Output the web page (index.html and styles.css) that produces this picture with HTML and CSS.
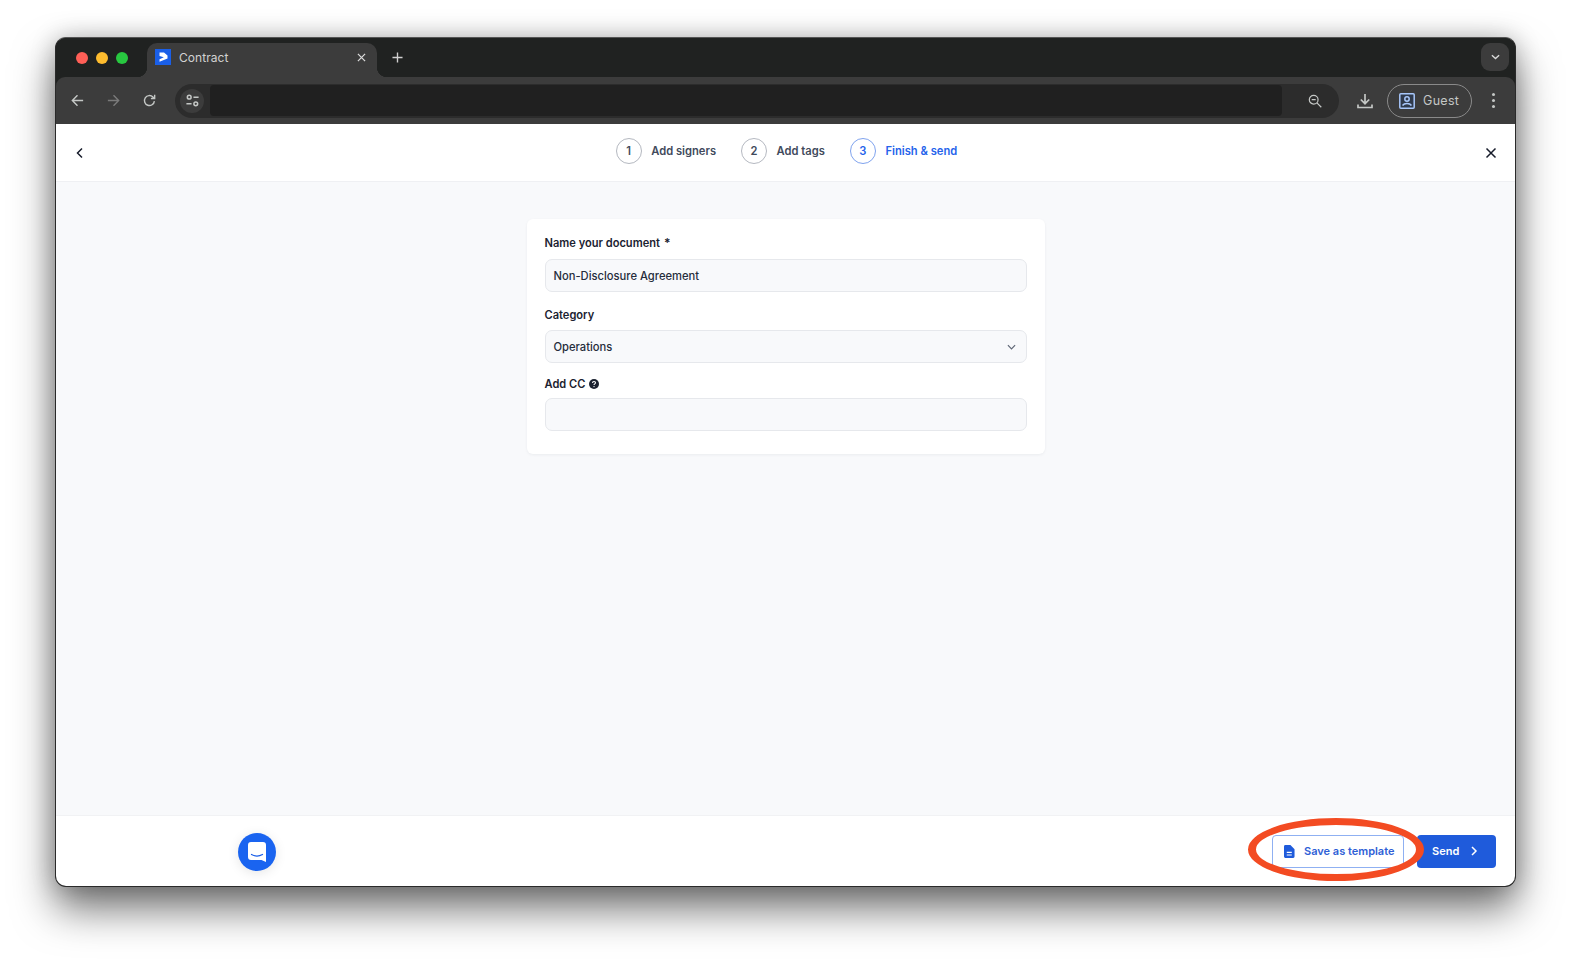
FILE: index.html
```html
<!DOCTYPE html>
<html lang="en">
<head>
    <meta charset="UTF-8">
    <meta name="viewport" content="width=device-width, initial-scale=1.0">
    <title>Contract</title>
    <link rel="stylesheet" href="styles.css">
</head>
<body>
    <div class="window">
        <div class="tabStrip">
            <div class="lights">
                <span class="light red"></span>
                <span class="light yellow"></span>
                <span class="light green"></span>
            </div>
            <div class="tab">
                <svg class="favicon" viewBox="0 0 16 16">
                    <rect width="16" height="16" fill="#1a5fe8"/>
                    <path d="M4.500 3.500h4.500l3.500 3v3l-8 3.200V10.300L8.800 8.300 4.500 7z" fill="#fff"/>
                </svg>
                <span class="tabTitle">Contract</span>
                <svg class="tabClose" viewBox="0 0 10 10"><path d="M1 1l8 8M9 1l-8 8"/></svg>
            </div>
            <svg class="newTab" viewBox="0 0 12 12"><path d="M6 .5v11M.5 6h11"/></svg>
            <div class="tabMenu">
                <svg viewBox="0 0 10 6"><path d="M1 1l4 3.600L9 1"/></svg>
            </div>
        </div>
        <div class="toolbar">
            <svg class="navIcon" viewBox="0 0 16 16"><path d="M14 8H2.500M8 2.500L2.500 8 8 13.500"/></svg>
            <svg class="navIcon dim" viewBox="0 0 16 16"><path d="M2 8h11.500M8 2.500L13.500 8 8 13.500"/></svg>
            <svg class="navIcon" viewBox="0 0 16 16"><path d="M13.200 8.600a5.300 5.300 0 1 1-1.500-4.300l1.600 1.500M13.500 1.800v4h-4"/></svg>
            <div class="omnibox">
                <div class="siteIcon">
                    <svg viewBox="0 0 16 16">
                        <circle cx="4.500" cy="4.500" r="2"/>
                        <path d="M9 4.500h5.500M1.500 11.500H7"/>
                        <circle cx="11.500" cy="11.500" r="2"/>
                    </svg>
                </div>
                <div class="address"></div>
                <svg class="zoomIcon" viewBox="0 0 16 16">
                    <circle cx="6.500" cy="6.500" r="5"/>
                    <path d="M10.200 10.200l5 5M4.200 6.500h4.600"/>
                </svg>
            </div>
            <svg class="downloadIcon" viewBox="0 0 16 16"><path d="M8 1v9.500M3.800 6.500L8 10.700l4.200-4.200M1 11.500v3h14v-3"/></svg>
            <div class="guest">
                <svg viewBox="0 0 16 16">
                    <rect x=".8" y=".8" width="14.400" height="14.400" rx="1"/>
                    <circle cx="8" cy="6" r="2.200"/>
                    <path d="M3.500 12.500c1-1.400 2.500-2 4.500-2s3.500.6 4.500 2"/>
                </svg>
                <span>Guest</span>
            </div>
            <div class="dots"><i></i><i></i><i></i></div>
        </div>
        <div class="page">
            <div class="header">
                <svg class="headerIcon" viewBox="0 0 12 12"><path d="M8 1.500L3.500 6 8 10.500"/></svg>
                <div class="steps">
                    <div class="step"><span class="stepNum">1</span>Add signers</div>
                    <div class="step"><span class="stepNum">2</span>Add tags</div>
                    <div class="step active"><span class="stepNum">3</span>Finish &amp; send</div>
                </div>
                <svg class="headerIcon" viewBox="0 0 12 12"><path d="M1.500 1.500l9 9M10.500 1.500l-9 9"/></svg>
            </div>
            <div class="main">
                <div class="card">
                    <label class="fieldLabel">Name your document <span class="req">*</span></label>
                    <div class="field">Non-Disclosure Agreement</div>
                    <label class="fieldLabel">Category</label>
                    <div class="field select">
                        Operations
                        <svg viewBox="0 0 10 6"><path d="M1 1l4 4 4-4"/></svg>
                    </div>
                    <label class="fieldLabel cc">
                        Add CC
                        <svg class="helpIcon" viewBox="0 0 10 10">
                            <circle cx="5" cy="5" r="5" fill="#1b2230"/>
                            <path d="M3.500 3.900c0-.9.7-1.400 1.500-1.400s1.500.5 1.500 1.300c0 1.100-1.500 1-1.500 2.200" fill="none" stroke="#fff" stroke-width="1.100"/>
                            <circle cx="5" cy="7.600" r=".7" fill="#fff"/>
                        </svg>
                    </label>
                    <div class="field last"></div>
                </div>
            </div>
            <div class="footer">
                <div class="actions">
                    <button class="btn outline">
                        <svg viewBox="0 0 12 14">
                            <path d="M1.500 0H7l4.500 4.500V12.500A1.500 1.500 0 0 1 10 14H1.500A1.500 1.500 0 0 1 0 12.500V1.500A1.500 1.500 0 0 1 1.500 0z" fill="#1f5bdb"/>
                            <path d="M3 8h5.500M3 10.800h5.500" stroke="#fff" stroke-width="1.300"/>
                        </svg>
                        Save as template
                    </button>
                    <button class="btn primary">
                        Send
                        <svg viewBox="0 0 8 12"><path d="M2 2l4 4-4 4"/></svg>
                    </button>
                    <div class="annotation"></div>
                </div>
            </div>
            <div class="chatBubble">
                <svg viewBox="0 0 18 20">
                    <path d="M3 0h12a3 3 0 0 1 3 3v17l-4.500-2H3a3 3 0 0 1-3-3V3a3 3 0 0 1 3-3z" fill="#fff"/>
                    <path d="M3.500 12.500c3.200 1.800 7.800 1.800 11 0" fill="none" stroke="#1a5fe8" stroke-width="1.300" stroke-linecap="round"/>
                </svg>
            </div>
        </div>
    </div>
</body>
</html>
```

FILE: styles.css
```css
* {
    margin: 0;
    padding: 0;
    box-sizing: border-box;
}

body {
    font-family: Inter, "Liberation Sans", sans-serif;
    background: #ffffff;
    height: 960px;
    padding: 37px 55px 0 55px;
    overflow: hidden;
}

.window {
    position: relative;
    width: 1461px;
    height: 850px;
    border-radius: 11px;
    border: 1px solid #2a2a2a;
    border-top-color: #555;
    background: #202221;
    box-shadow: 0 22px 42px rgba(0, 0, 0, 0.55), 0 0 24px rgba(0, 0, 0, 0.22);
    display: flex;
    flex-direction: column;
    overflow: hidden;
}

.tabStrip {
    height: 39px;
    flex-shrink: 0;
    display: flex;
    align-items: flex-end;
    padding-left: 91px;
    background: #202221;
    position: relative;
}

.lights {
    position: absolute;
    left: 20px;
    top: 14px;
    display: flex;
    gap: 8px;
}

.light {
    width: 12px;
    height: 12px;
    border-radius: 50%;
}

.red { background: #ff5f57; }
.yellow { background: #febc2e; }
.green { background: #28c840; }

.tab {
    position: relative;
    width: 230px;
    height: 34px;
    background: #3c3c3c;
    border-radius: 10px 10px 0 0;
    display: flex;
    align-items: center;
    padding: 0 11px 6px 8px;
}

.tab::before,
.tab::after {
    content: "";
    position: absolute;
    bottom: 0;
    width: 10px;
    height: 10px;
}

.tab::before {
    left: -10px;
    background: radial-gradient(circle at 0 0, transparent 10px, #3c3c3c 10.500px);
}

.tab::after {
    right: -10px;
    background: radial-gradient(circle at 100% 0, transparent 10px, #3c3c3c 10.500px);
}

.favicon {
    width: 16px;
    height: 16px;
    flex-shrink: 0;
}

.tabTitle {
    margin-left: 8px;
    flex: 1;
    font-size: 12px;
    color: #d2d2d2;
    letter-spacing: 0.05px;
}

.tabClose {
    width: 9px;
    height: 9px;
    fill: none;
    stroke: #d8d8d8;
    stroke-width: 1.400;
}

.newTab {
    width: 11px;
    height: 11px;
    margin: 0 0 14px 15px;
    fill: none;
    stroke: #d0d0d0;
    stroke-width: 1.500;
}

.tabMenu {
    position: absolute;
    right: 6px;
    top: 5px;
    width: 28px;
    height: 28px;
    border-radius: 9px;
    background: #3c3c3c;
    display: flex;
    align-items: center;
    justify-content: center;
}

.tabMenu svg {
    width: 9px;
    height: 6px;
    fill: none;
    stroke: #d8d8d8;
    stroke-width: 1.600;
}

.toolbar {
    height: 47px;
    flex-shrink: 0;
    background: #3c3c3c;
    border-radius: 9px 9px 0 0;
    display: flex;
    align-items: center;
    padding-left: 14px;
}

.navIcon {
    width: 15px;
    height: 15px;
    margin-right: 21px;
    fill: none;
    stroke: #c4c7c5;
    stroke-width: 1.500;
}

.dim {
    stroke: #7a7a7a;
}

.omnibox {
    width: 1164px;
    height: 34px;
    margin-left: -3px;
    border-radius: 17px;
    background: #2c2c2c;
    display: flex;
    align-items: center;
    padding-left: 5px;
}

.siteIcon {
    width: 24px;
    height: 24px;
    border-radius: 50%;
    background: #3c3c3c;
    display: flex;
    align-items: center;
    justify-content: center;
}

.siteIcon svg {
    width: 15px;
    height: 15px;
    fill: none;
    stroke: #c4c7c5;
    stroke-width: 1.600;
}

.address {
    width: 1072px;
    height: 31px;
    margin-left: 6px;
    border-radius: 4px;
    background: #202020;
}

.zoomIcon {
    width: 14px;
    height: 14px;
    margin-left: 26px;
    fill: none;
    stroke: #c4c7c5;
    stroke-width: 1.400;
}

.downloadIcon {
    width: 16px;
    height: 16px;
    margin-left: 18px;
    fill: none;
    stroke: #c4c7c5;
    stroke-width: 1.700;
}

.guest {
    width: 85px;
    height: 34px;
    margin-left: 14px;
    border: 1px solid #8a8a8a;
    border-radius: 17px;
    display: flex;
    align-items: center;
    padding-left: 11px;
    gap: 8px;
    font-size: 12.500px;
    color: #c4c7c5;
    letter-spacing: 0.3px;
}

.guest svg {
    width: 16px;
    height: 16px;
    fill: #2f3a4c;
    stroke: #a8c7fa;
    stroke-width: 1.500;
    flex-shrink: 0;
}

.dots {
    margin-left: 20px;
    display: flex;
    flex-direction: column;
    gap: 3px;
}

.dots i {
    width: 3px;
    height: 3px;
    border-radius: 50%;
    background: #c4c7c5;
}

.page {
    flex: 1;
    background: #ffffff;
    display: flex;
    flex-direction: column;
    position: relative;
    min-height: 0;
}

.header {
    height: 58px;
    flex-shrink: 0;
    border-bottom: 1px solid #eff0f3;
    display: flex;
    align-items: center;
    justify-content: space-between;
    padding: 0 18px;
}

.headerIcon {
    width: 12px;
    height: 12px;
    fill: none;
    stroke: #171c2b;
    stroke-width: 1.500;
}

.steps {
    display: flex;
    gap: 25px;
    margin: -3px 0 0 2px;
}

.step {
    display: flex;
    align-items: center;
    gap: 9.500px;
    font-size: 11.200px;
    font-weight: 600;
    color: #414a5c;
}

.stepNum {
    width: 26px;
    height: 26px;
    border: 1px solid #b4b8c0;
    border-radius: 50%;
    display: flex;
    align-items: center;
    justify-content: center;
}

.step.active {
    color: #2563eb;
}

.step.active .stepNum {
    border-color: #7fa3ee;
}

.main {
    flex: 1;
    background: #f8f9fb;
    padding-top: 37px;
    display: flex;
    justify-content: center;
}

.card {
    width: 518px;
    height: 235px;
    background: #ffffff;
    border-radius: 6px;
    box-shadow: 0 1px 3px rgba(20, 30, 50, 0.06);
    padding: 16px 18px 0;
}

.fieldLabel {
    display: flex;
    align-items: center;
    gap: 1px;
    height: 15px;
    font-size: 11.100px;
    font-weight: 600;
    color: #1b2230;
}

.req {
    font-size: 12px;
    margin-left: 3px;
}

.field {
    height: 33px;
    margin: 8px 0 15px;
    border: 1px solid #e6e8ec;
    border-radius: 7px;
    background: #f8f9fb;
    display: flex;
    align-items: center;
    justify-content: space-between;
    padding: 0 8px;
    font-size: 11.200px;
    font-weight: 500;
    color: #262d3b;
}

.field:first-of-type {
    margin-top: 9px;
}

.select svg {
    width: 9px;
    height: 6px;
    margin-right: 2px;
    fill: none;
    stroke: #5e6675;
    stroke-width: 1.300;
}

.fieldLabel.cc {
    margin-top: -2px;
    gap: 4px;
}

.helpIcon {
    width: 10px;
    height: 10px;
}

.field.last {
    margin-top: 7px;
}

.footer {
    height: 71px;
    flex-shrink: 0;
    border-top: 1px solid #f1f2f4;
    display: flex;
    align-items: center;
    justify-content: flex-end;
    padding-right: 19px;
}

.actions {
    position: relative;
    display: flex;
    gap: 13px;
}

.btn {
    height: 33px;
    border-radius: 4px;
    font-family: inherit;
    font-size: 11px;
    font-weight: 600;
    display: flex;
    align-items: center;
    cursor: pointer;
}

.outline {
    width: 132px;
    background: #ffffff;
    border: 1px solid #8fb0f2;
    color: #2f5fd6;
    padding-left: 11px;
    gap: 9px;
}

.outline svg {
    width: 11px;
    height: 13px;
}

.primary {
    width: 79px;
    background: #1f5bdb;
    border: none;
    color: #ffffff;
    padding-left: 15px;
    gap: 11px;
}

.primary svg {
    width: 8px;
    height: 12px;
    fill: none;
    stroke: #ffffff;
    stroke-width: 1.500;
}

.annotation {
    position: absolute;
    left: -24px;
    top: -17px;
    width: 176px;
    height: 63px;
    border-style: solid;
    border-color: #f34b22;
    border-width: 7px 8px;
    border-radius: 50%;
    pointer-events: none;
}

.chatBubble {
    position: absolute;
    left: 182px;
    bottom: 15px;
    width: 38px;
    height: 38px;
    border-radius: 50%;
    background: #1a64f0;
    box-shadow: 0 2px 12px rgba(0, 0, 0, 0.1);
    display: flex;
    align-items: center;
    justify-content: center;
}

.chatBubble svg {
    width: 18px;
    height: 20px;
}
```
